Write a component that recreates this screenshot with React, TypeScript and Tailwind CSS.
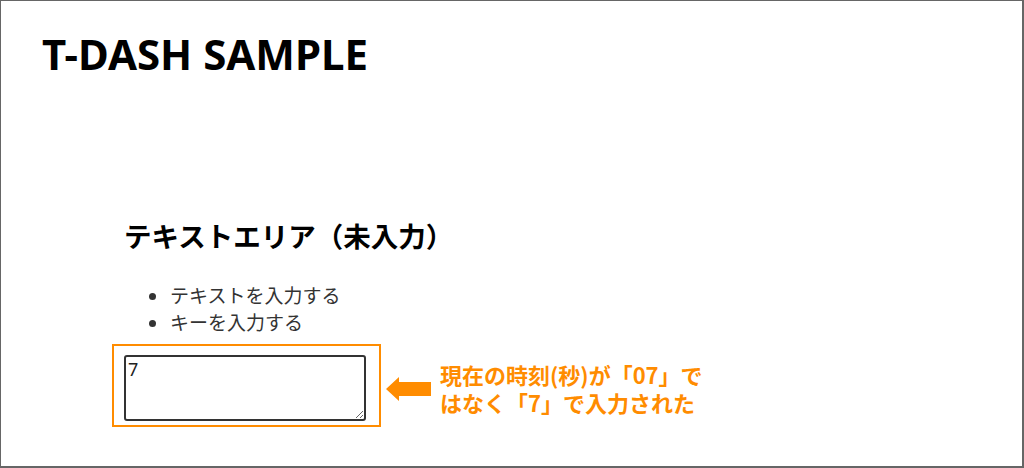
import { useState } from 'react';

const jp = "font-['Noto_Sans_CJK_JP','Noto_Sans',sans-serif]";

export default function App() {
  const [value, setValue] = useState('7');

  return (
    <div className="w-[1024px] h-[468px] bg-white border-t border-l border-r-2 border-b-2 border-[#666] overflow-hidden">
      {/* page title */}
      <h1 className="pl-[41px] pt-[28px] text-[42px] leading-[50px] font-bold text-black font-['Noto_Sans',sans-serif]">
        T-DASH SAMPLE
      </h1>

      <section className="pl-[123px] mt-[138px]">
        <h2 className={`${jp} text-[27.5px] leading-[36px] font-bold text-black`}>
          テキストエリア（未入力）
        </h2>

        <ul className={`${jp} mt-[28px] ml-[46px] list-disc text-[19px] leading-[27px] text-[#333]`}>
          <li>テキストを入力する</li>
          <li>キーを入力する</li>
        </ul>
      </section>

      {/* textarea + note */}
      <div className="flex items-center pl-[111px] mt-[9px]">
        <div className="w-[269px] h-[83px] border-2 border-[#ff8c00] pl-[10px] pt-[9px]">
          <textarea
            value={value}
            onChange={(e) => setValue(e.target.value)}
            className="block w-[242px] h-[66px] border-2 border-[#333] rounded-[3px] px-[2px] pt-[2px] pb-0 text-[18px] leading-[20px] text-[#222] font-['Noto_Sans',sans-serif] outline-none resize"
          />
        </div>

        <svg width="45" height="24" viewBox="0 0 45 24" className="ml-[5px] mt-[6px]">
          <path d="M0 12 L13 0 L13 5 L45 5 L45 19 L13 19 L13 24 Z" fill="#ff8c00" />
        </svg>

        <p className={`${jp} ml-[9px] mt-[4px] text-[22px] leading-[28px] font-bold text-[#ff8c00]`}>
          現在の時刻(秒)が「07」で
          <br />
          はなく「7」で入力された
        </p>
      </div>
    </div>
  );
}
